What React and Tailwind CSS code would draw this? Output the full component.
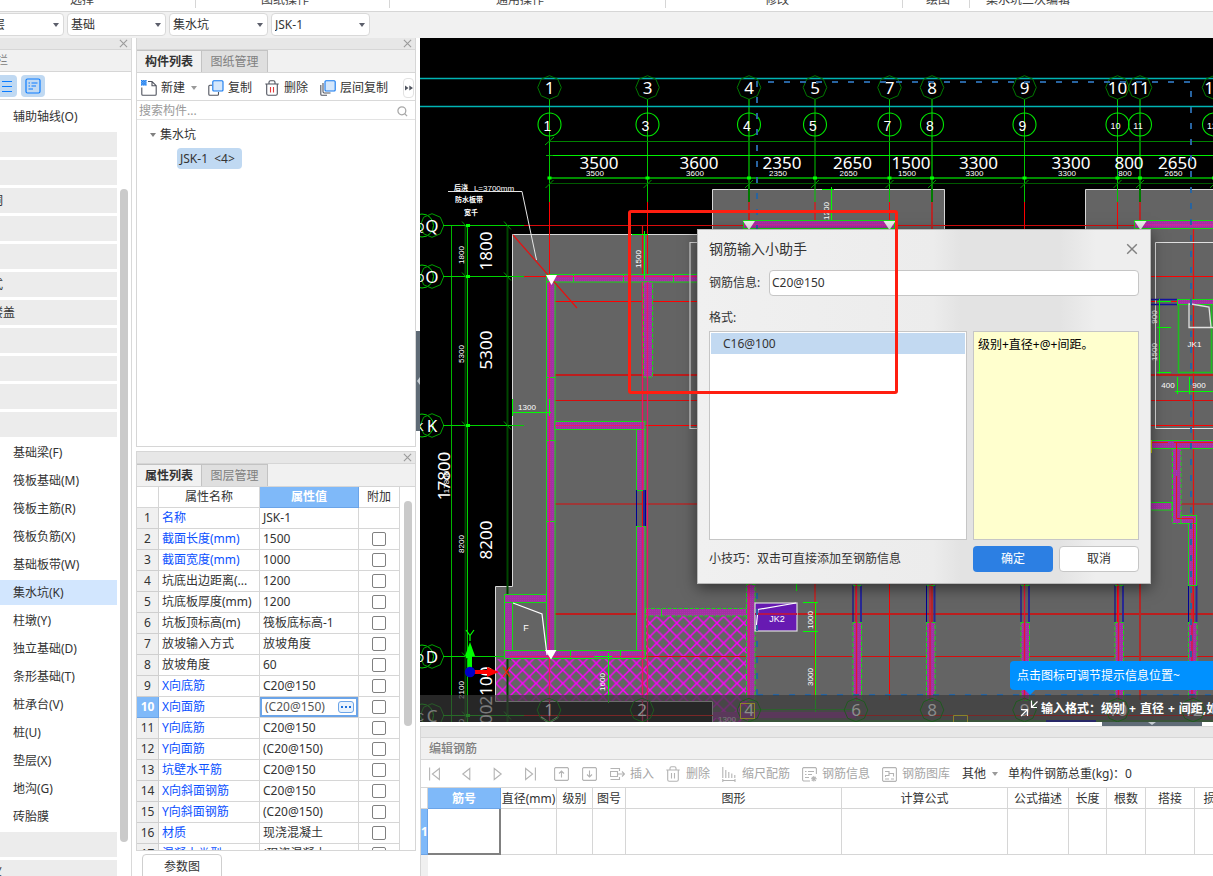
import React from "react";

/* ---------- small shared pieces ---------- */

function Cross({ className = "size-[9px] text-[#9a9a9a]" }) {
  return (
    <svg viewBox="0 0 10 10" className={className} fill="none" stroke="currentColor" strokeWidth="1.2" aria-hidden="true">
      <path d="M1 1L9 9M9 1L1 9" />
    </svg>
  );
}

function Caret({ className = "text-[#5c5f6b]" }) {
  return (
    <svg viewBox="0 0 6 4" className={`h-1 w-1.5 ${className}`} fill="currentColor" aria-hidden="true">
      <path d="M0 0H6L3 4Z" />
    </svg>
  );
}

function StripBar() {
  return (
    <div className="flex h-3 shrink-0 items-center justify-end border-b border-[#d6d6d6] bg-[#e7e7e7] pr-[3px]">
      <button type="button" aria-label="×" className="flex">
        <Cross />
      </button>
    </div>
  );
}

function Tabs({ items }) {
  return (
    <div role="tablist" className="flex h-[23px] shrink-0 border-b border-[#d6d6d6] bg-[#f1f1f1]">
      {items.map((t, i) => (
        <button
          key={t}
          type="button"
          role="tab"
          aria-selected={i === 0}
          className={
            i === 0
              ? "w-[65px] border-r border-t border-[#c3c3c3] bg-[#f1f1f1] font-bold text-[#333]"
              : "w-[66px] border-r border-t border-[#c3c3c3] bg-[#dfdfdf] text-[#808080]"
          }
        >
          {t}
        </button>
      ))}
    </div>
  );
}

/* ---------- top bars ---------- */

const ribbon = [
  { t: "选择", w: "w-[196px] pl-[70px]" },
  { t: "图纸操作", w: "w-[194px] pl-[65px]" },
  { t: "通用操作", w: "w-[276px] pl-[106px]" },
  { t: "修改", w: "w-[237px] pl-[99px]" },
  { t: "绘图", w: "w-[67px] pl-[23px]" },
  { t: "集水坑二次编辑", w: "w-[244px] pl-4" },
];

function Ribbon() {
  return (
    <div className="flex h-3 shrink-0 items-end overflow-hidden border-b border-[#d6d6d6] bg-white pb-[3px]">
      {ribbon.map((r) => (
        <div key={r.t} className={`flex h-4 shrink-0 items-end border-r border-[#d6d6d6] ${r.w}`}>
          <span className="leading-4 text-[#444]">{r.t}</span>
        </div>
      ))}
    </div>
  );
}

function Picker({ value, label, className }) {
  return (
    <div className={`relative flex shrink-0 items-center ${className}`}>
      <select
        aria-label={label}
        defaultValue={value}
        className="h-[23px] w-full appearance-none rounded border border-[#d9d9d9] bg-white pl-[3px] text-[#333] outline-none"
      >
        <option>{value}</option>
      </select>
      <span className="pointer-events-none absolute right-[5px]">
        <Caret />
      </span>
    </div>
  );
}

/* ---------- module sidebar ---------- */

const groups = ["", "", "洞", "", "", "式", "楼盖", "", "", "", ""];
const modules = [
  "基础梁(F)", "筏板基础(M)", "筏板主筋(R)", "筏板负筋(X)", "基础板带(W)", "集水坑(K)", "柱墩(Y)",
  "独立基础(D)", "条形基础(T)", "桩承台(V)", "桩(U)", "垫层(X)", "地沟(G)", "砖胎膜",
];

function Group({ name }) {
  return (
    <div className="flex h-[25px] shrink-0 items-center bg-[#ececec]">
      <span className="-ml-[9px] whitespace-nowrap">{name}</span>
    </div>
  );
}

function Sidebar() {
  return (
    <aside className="flex w-[132px] shrink-0 flex-col overflow-hidden border-r border-[#d9d9d9] bg-white">
      <StripBar />
      <div className="flex h-[22px] shrink-0 items-center border-b border-[#d6d6d6] bg-[#f1f1f1]">
        <span className="-ml-1 text-[#808080]">栏</span>
      </div>
      <div className="flex h-7 shrink-0 items-center gap-1 border-b border-[#d6d6d6]">
        <button type="button" aria-label="≡" className="flex h-[22px] w-[17px] items-center rounded-r bg-[#c0d9f2]">
          <svg viewBox="0 0 17 22" className="h-[22px] w-[17px]" stroke="#0a7cff" strokeWidth="1.2" aria-hidden="true">
            <path d="M2 6.5H12M2 11.5H12M2 16.5H12" />
          </svg>
        </button>
        <button type="button" aria-label="☰" className="flex h-[22px] w-6 items-center justify-center rounded bg-[#c0d9f2]">
          <svg viewBox="0 0 16 16" className="size-4" fill="none" stroke="#0a7cff" strokeWidth="1.2" aria-hidden="true">
            <rect x="1" y="1" width="14" height="14" rx="1.5" />
            <path d="M3.5 5H5M6.5 5H12.5M3.5 8H5M6.5 8H11M3.5 11H8" />
          </svg>
        </button>
      </div>
      <div className="flex min-h-0 flex-1 gap-[3px] overflow-hidden">
        <div className="flex w-[117px] flex-col gap-[3px] pt-1">
          <a href="#aux" className="flex h-[25px] shrink-0 items-center pl-[13px]">辅助轴线(O)</a>
          {groups.map((g, i) => (
            <Group key={i} name={g} />
          ))}
          {modules.map((m) => (
            <a
              key={m}
              href={`#${m}`}
              className={`flex h-[25px] shrink-0 items-center pl-[13px] ${m === "集水坑(K)" ? "bg-[#d2e6fe]" : ""}`}
            >
              {m}
            </a>
          ))}
          <Group name="" />
          <Group name="义" />
        </div>
        <div className="flex w-2 flex-col pb-[34px] pt-[89px]">
          <div className="flex-1 rounded-full bg-[#cacaca]" />
        </div>
      </div>
    </aside>
  );
}

/* ---------- component list ---------- */

function NewIcon() {
  return (
    <svg viewBox="0 0 16 16" className="size-4" fill="none" aria-hidden="true">
      <path d="M7 1.5H11L15.2 5.7V14.3Q15.2 15.3 14.2 15.3H1.8Q.8 15.3 .8 14.3V7.5M11 1.5V5.7H15.2" stroke="#50545f" strokeWidth="1.1" />
      <g fill="#1479ee">
        <rect x="0" y="0" width="5.5" height="5.5" fill="#8fc1f8" />
        <path d="M0 0h1.2v1.2H0zM2.2 0h1.2v1.2H2.2zM4.3 0h1.2v1.2H4.3zM1.1 1.1h1.2v1.2H1.1zM3.2 1.1h1.2v1.2H3.2zM0 2.2h1.2v1.2H0zM2.2 2.2h1.2v1.2H2.2zM4.3 2.2h1.2v1.2H4.3zM1.1 3.2h1.2v1.2H1.1zM3.2 3.2h1.2v1.2H3.2zM0 4.3h1.2v1.2H0zM2.2 4.3h1.2v1.2H2.2zM4.3 4.3h1.2v1.2H4.3z" />
      </g>
    </svg>
  );
}

function CopyIcon() {
  return (
    <svg viewBox="0 0 16 16" className="size-4" fill="none" aria-hidden="true">
      <path d="M4 5.3H1.8Q.8 5.3 .8 6.3V14.3Q.8 15.3 1.8 15.3H9.5Q10.5 15.3 10.5 14.3V12" stroke="#50545f" strokeWidth="1.1" />
      <rect x="4.8" y=".8" width="10.2" height="10.2" rx="1" fill="#d5e7fb" stroke="#1479ee" strokeWidth="1.1" />
    </svg>
  );
}

function LayersIcon() {
  return (
    <svg viewBox="0 0 16 16" className="size-4" fill="none" aria-hidden="true">
      <path d="M.8 5V14.3Q.8 15.3 1.8 15.3H7M3 3V11.5Q3 13 4.2 13H10.5" stroke="#50545f" strokeWidth="1.1" />
      <rect x="5" y=".8" width="10.2" height="10.2" rx="1" fill="#d5e7fb" stroke="#1479ee" strokeWidth="1.1" />
    </svg>
  );
}

function TrashIcon({ body = "#50545f", bars = "#e23b3b" }) {
  return (
    <svg viewBox="0 0 14 16" className="h-4 w-3.5" fill="none" strokeWidth="1.1" aria-hidden="true">
      <path d="M.3 4H13.7M4 4V2.3Q4 .8 5.5 .8H8.5Q10 .8 10 2.3V4M1.7 4V13.8Q1.7 15.3 3.2 15.3H10.8Q12.3 15.3 12.3 13.8V4" stroke={body} />
      <path d="M5.5 7V12.5M8.5 7V12.5" stroke={bars} />
    </svg>
  );
}

function ComponentPanel() {
  return (
    <section className="flex min-h-0 flex-1 flex-col border border-t-0 border-[#d6d6d6] bg-white">
      <StripBar />
      <Tabs items={["构件列表", "图纸管理"]} />
      <div className="flex h-7 shrink-0 items-center whitespace-nowrap border-b border-[#d9d9d9] pl-1 pt-0.5">
        <button type="button" className="flex items-center gap-1"><NewIcon />新建</button>
        <span className="ml-[6px] mr-[11px] flex"><Caret className="text-[#9a9a9a]" /></span>
        <button type="button" className="flex items-center gap-1"><CopyIcon />复制</button>
        <button type="button" className="ml-[13px] flex items-center gap-[5px]"><TrashIcon />删除</button>
        <button type="button" className="ml-3 flex items-center gap-1"><LayersIcon />层间复制</button>
        <button type="button" aria-label="»" className="ml-auto mr-px flex h-5 w-[11px] items-center justify-center rounded border border-[#e2e2e2]">
          <svg viewBox="0 0 8 6" className="h-1.5 w-2 shrink-0" fill="#50545f" aria-hidden="true">
            <path d="M0 .5L3.5 3L0 5.5ZM4.3 .5L8 3L4.3 5.5Z" />
          </svg>
        </button>
      </div>
      <div className="flex h-[19px] shrink-0 items-center border-b border-[#e3e3e3] pl-0.5 pr-[7px] pt-0.5">
        <input aria-label="搜索构件..." placeholder="搜索构件..." className="min-w-0 flex-1 bg-transparent outline-none placeholder:text-[#9a9a9a]" />
        <svg viewBox="0 0 12 12" className="size-[11px]" fill="none" stroke="#a8a8a8" strokeWidth="1.4" aria-hidden="true">
          <circle cx="5.3" cy="5.3" r="4.3" />
          <path d="M8.5 8.5L11 11" />
        </svg>
      </div>
      <div className="min-h-0 flex-1 pt-[3px]">
        <div className="flex h-6 items-center gap-1 pl-[13px]">
          <Caret className="text-[#808080]" />
          <span>集水坑</span>
        </div>
        <div className="ml-10 mt-px inline-flex h-[21px] items-center rounded bg-[#c0d9f2] pl-[3px] pr-1">
          <span className="whitespace-pre">{"JSK-1  <4> "}</span>
        </div>
      </div>
    </section>
  );
}

/* ---------- property list ---------- */

const props = [
  ["名称", "JSK-1", 1], ["截面长度(mm)", "1500", 1], ["截面宽度(mm)", "1000", 1], ["坑底出边距离(...", "1200", 0],
  ["坑底板厚度(mm)", "1200", 0], ["坑板顶标高(m)", "筏板底标高-1", 0], ["放坡输入方式", "放坡角度", 0],
  ["放坡角度", "60", 0], ["X向底筋", "C20@150", 1], ["X向面筋", "(C20@150)", 1], ["Y向底筋", "C20@150", 1],
  ["Y向面筋", "(C20@150)", 1], ["坑壁水平筋", "C20@150", 1], ["X向斜面钢筋", "C20@150", 1],
  ["Y向斜面钢筋", "(C20@150)", 1], ["材质", "现浇混凝土", 1], ["混凝土类型", "(现浇混凝土", 1],
];

function PropertyPanel() {
  return (
    <section className="flex h-[425px] shrink-0 flex-col">
      <div className="flex h-[400px] shrink-0 flex-col border border-[#d6d6d6] bg-white">
        <StripBar />
        <Tabs items={["属性列表", "图层管理"]} />
        <div className="flex min-h-0 flex-1 overflow-hidden">
          <table className="h-fit w-[263px] table-fixed border-separate border-spacing-0">
            <colgroup>
              <col className="w-[22px]" />
              <col className="w-[101px]" />
              <col className="w-[99px]" />
              <col className="w-[41px]" />
            </colgroup>
            <thead>
              <tr className="h-[21px]">
                <th className="border-b border-r border-[#d6d6d6] p-0" />
                <th className="border-b border-r border-[#d6d6d6] p-0 font-normal">属性名称</th>
                <th className="border-b border-r border-[#6ba4e8] bg-[#7fb9f9] p-0 text-white">属性值</th>
                <th className="border-b border-r border-[#d6d6d6] p-0 font-normal">附加</th>
              </tr>
            </thead>
            <tbody>
              {props.map(([name, value, blue], i) => {
                const active = i === 9;
                return (
                  <tr key={name} className="h-[21px]">
                    <th
                      className={
                        active
                          ? "border-b border-r border-[#6ba4e8] bg-[#7fb9f9] p-0 text-white"
                          : "border-b border-r border-[#cfcfcf] bg-[#f0f0f0] p-0 font-normal"
                      }
                    >
                      {i + 1}
                    </th>
                    <td className={`overflow-hidden whitespace-nowrap border-b border-r border-[#d6d6d6] p-0 pl-[3px] ${blue ? "text-[#0a50ff]" : ""}`}>
                      {name}
                    </td>
                    <td className={`overflow-hidden whitespace-nowrap border-b border-r border-[#d6d6d6] p-0 ${active ? "" : "pl-[3px]"}`}>
                      {active ? (
                        <div className="flex h-5 items-center justify-between border-2 border-[#6ba4e8] pl-[3px] pr-0.5 text-[#555]">
                          <span>{value}</span>
                          <button type="button" aria-label="···" className="flex h-3 w-4 items-center justify-center rounded-[3px] border border-[#6ba4e8] bg-[#e8f2fd]">
                            <svg viewBox="0 0 10 2" className="h-0.5 w-2.5" fill="#1d6fd8" aria-hidden="true">
                              <path d="M0 0h2v2H0zM4 0h2v2H4zM8 0h2v2H8z" />
                            </svg>
                          </button>
                        </div>
                      ) : (
                        value
                      )}
                    </td>
                    <td className="border-b border-r border-[#d6d6d6] p-0">
                      {i > 0 && (
                        <input
                          type="checkbox"
                          aria-label={name}
                          className="mx-auto block size-3.5 appearance-none rounded-[2px] border border-[#808080] bg-white"
                        />
                      )}
                    </td>
                  </tr>
                );
              })}
            </tbody>
          </table>
          <div className="ml-1 mt-[14px] h-[225px] w-2 rounded-full bg-[#cacaca]" />
        </div>
      </div>
      <div className="flex flex-1 overflow-hidden pl-1.5 pt-[3px]">
        <button type="button" className="h-[26px] w-20 rounded border border-[#cfcfcf] bg-white">参数图</button>
      </div>
    </section>
  );
}

/* ---------- drawing ---------- */

const BIG = "'Noto Sans', 'Noto Sans CJK SC', sans-serif";
const SMALL = "'Liberation Sans', sans-serif";

const axes = [
  [549.5, "1", 1], [647.5, "3", 1], [749, "4", 2], [815, "5", 1], [889.5, "7", 1], [932, "8", 2],
  [1024.5, "9", 1], [1117.5, "10", 1], [1140, "11", 2], [1214, "12", 1],
];
const spans = [
  [599, "3500"], [699, "3600"], [782, "2350"], [852.5, "2650"], [911, "1500"],
  [978.5, "3300"], [1071, "3300"], [1129, "800"], [1177.5, "2650"],
];
const rows = [[225.5, "Q"], [276.5, "O"], [425.5, "K"], [656.5, "D"], [715.5, "C"]];
const rowSpans = [[251, "1800"], [350, "5300"], [540, "8200"], [686, "2100"], [724, "5100"]];
const lowAxes = [
  [549, "1"], [642, "2"], [749, "4"], [856, "6"], [932, "8"], [1024.5, "9"], [1117.5, "10"], [1193, "12"],
];

function octagon(cx, cy, r) {
  return Array.from({ length: 8 }, (_, i) => {
    const a = (Math.PI / 4) * i;
    return `${(cx + r * Math.sin(a)).toFixed(1)},${(cy - r * Math.cos(a)).toFixed(1)}`;
  }).join(" ");
}

function Dim({ x, y, children, v = false, size = 8 }) {
  return (
    <text
      x={x}
      y={y}
      fontFamily={SMALL}
      fontSize={size}
      fill="#fff"
      textAnchor="middle"
      dominantBaseline="central"
      transform={v ? `rotate(-90 ${x} ${y})` : undefined}
    >
      {children}
    </text>
  );
}

function BigText({ x, y, children, v = false, fill = "#fff" }) {
  return (
    <text
      x={x}
      y={y + 6}
      fontFamily={BIG}
      fontSize="17"
      fill={fill}
      textAnchor="middle"
      transform={v ? `rotate(-90 ${x} ${y})` : undefined}
    >
      {children}
    </text>
  );
}

function Wall({ x, y, w, h, dashed = false }) {
  return (
    <g>
      <rect x={x} y={y} width={w} height={h} fill="url(#wall)" />
      <rect x={x} y={y} width={w} height={h} fill="none" stroke="#14dc14" strokeWidth="1" strokeDasharray={dashed ? "4 1.5" : undefined} />
    </g>
  );
}

function Drawing() {
  return (
    <svg viewBox="420 38 793 684" preserveAspectRatio="xMinYMin slice" className="block size-full" fill="none">
      <defs>
        <pattern id="wall" width="2" height="2" patternUnits="userSpaceOnUse">
          <rect width="2" height="2" fill="#a035a0" />
          <rect width="1" height="1" fill="#b22cb2" />
        </pattern>
        <pattern id="hatch" width="13.4" height="13.4" patternUnits="userSpaceOnUse">
          <path d="M-1 -1L14.4 14.4M14.4 -1L-1 14.4" stroke="#f0f" strokeWidth="1.4" />
        </pattern>
      </defs>

      <rect x="420" y="38" width="793" height="684" fill="#000" />
      <path d="M512.5 234.5H712.5V189.5H944.5V236H1085.5V189.5H1214V723H712.5V701.5H495.5V586.5H512.5Z" fill="#646464" />
      <path d="M512.5 586.5V234.5H712.5V189.5H944.5V236M1085.5 236V189.5H1214M512.5 586.5H495.5V701.5H712.5V723" stroke="#d8d8d8" />
      <path d="M496 659H646V616H748V723H713V701H496Z" fill="url(#hatch)" />

      {/* horizontal axis lines */}
      <g stroke="#f00">
        <path d="M524 276.5H1214M549 301.5H1214M549 425.5H1214" />
        <path d="M524 225.5H1214M549 400.5H1214M549 504H1214M524 656.5H1214" stroke="#d80c0c" />
        <path d="M549 375H1214M549 614H1214" stroke="#bc1e1e" strokeWidth="2" />
        <path d="M524 715.5H1214" />
      </g>

      {/* vertical axis lines */}
      {axes.map(([x, , w]) => (
        <g key={x}>
          <path d={`M${x} 202V700`} stroke={w === 2 ? "#b42828" : "#f00"} strokeWidth={w} />
          <path d={`M${x} 99V202`} stroke={w === 2 ? "#007a00" : "#00c800"} strokeWidth={w} />
        </g>
      ))}
      <path d="M642.5 226V722M856 584V700M1193.5 229V700" stroke="#e81010" strokeWidth="1.2" />

      {/* top dimension strings */}
      <path d="M420 78.5H1214M420 106.5H1214" stroke="#00b4b4" strokeWidth="1.3" />
      <path d="M549 141.5H1214" stroke="#008200" />
      <path d="M549 155.5H1214" stroke="#00f000" />
      <path d="M549 178H1214" stroke="#008c00" strokeWidth="2" />
      <path d="M549 183.5H1214" stroke="#005a00" />
      <path d="M545 145L554 137M546 155.5H553" stroke="#00b400" />
      {axes.map(([x, label]) => (
        <g key={label}>
          <polygon points={octagon(x, 87.5, 11.8)} stroke="#007800" />
          <circle cx={x} cy="124.5" r="11.5" stroke="#00e600" strokeWidth="1.1" />
          <path d={`M${x - 4} 188L${x + 4} 180`} stroke="#009600" />
          <path d={`M${x - 2} 178H${x + 2}`} stroke="#0f0" strokeWidth="3" />
          <BigText x={x} y={87.5}>{label}</BigText>
          <Dim x={x - 2} y={126} size={label.length > 1 ? 9 : 14}>{label}</Dim>
        </g>
      ))}
      {spans.map(([x, label]) => (
        <g key={x}>
          <BigText x={x} y={163}>{label}</BigText>
          <Dim x={x - 4} y={173}>{label}</Dim>
        </g>
      ))}

      {/* left dimension strings */}
      <path d="M451.5 225V722" stroke="#00b400" />
      <path d="M465.5 225V722" stroke="#004600" strokeWidth="2" />
      <path d="M467.5 225V722" stroke="#00d200" />
      <path d="M507.5 225V722" stroke="#004600" strokeWidth="2" />
      {rows.map(([y, label]) => (
        <g key={label}>
          <circle cx="422" cy={y} r="11.5" stroke="#00d200" />
          <polygon points={octagon(432, y, 11.8)} stroke="#00a000" />
          <path d={`M443 ${y}H524`} stroke="#00d200" />
          <path d={`M504 ${y - 4}L511 ${y + 4}M462 ${y - 4}L468 ${y + 3}`} stroke="#009600" />
          <path d={`M466 ${y}H470`} stroke="#0f0" strokeWidth="3" />
          <BigText x={432} y={y}>{label}</BigText>
          <Dim x={420} y={y + 1} size={11}>{label}</Dim>
        </g>
      ))}
      {rowSpans.map(([y, label]) => (
        <g key={label}>
          <BigText x={486} y={y} v>{label}</BigText>
          <Dim x={461} y={y + 4} v>{label}</Dim>
        </g>
      ))}
      <BigText x={444} y={476} v>17800</BigText>
      <Dim x={446} y={482} v>17800</Dim>

      {/* leader note */}
      <path d="M448 191.5H522L536.5 260" stroke="#e6e6e6" />
      <Dim x={494} y={188}>L=3700mm</Dim>
      <g fontFamily="'Noto Sans CJK SC', sans-serif" fontSize="7" fontWeight="700" fill="#fff">
        <text x="454" y="190">后浇</text>
        <text x="455" y="202">防水板带</text>
        <text x="464" y="215">宽千</text>
      </g>

      {/* left building walls */}
      <Wall x={546.5} y={274.5} w={152} h={7.5} />
      <Wall x={546.5} y={282} w={8.5} h={369} />
      <Wall x={643.5} y={282} w={9} h={95} dashed />
      <Wall x={555} y={421.5} w={90} h={8} />
      <Wall x={636.5} y={429.5} w={8.5} h={61} />
      <Wall x={636.5} y={526.5} w={8.5} h={132} />
      <Wall x={504.5} y={650.5} w={140.5} h={8} />
      <Wall x={504.5} y={594.5} w={8} h={56} />
      <Wall x={504.5} y={594.5} w={42} h={8} />
      <Wall x={645.5} y={608.5} w={102} h={7.5} dashed />
      <Wall x={746.5} y={584.5} w={8.5} h={116} dashed />
      <path d="M573.5 274V282M623.5 274V282M673.5 274V282M547 377.5H555M547 440.5H555M547 521.5H555M570.5 651V658M620.5 651V658M661.5 609V616" stroke="#14dc14" />
      <path d="M549.5 282V722M642.5 282V490M642.5 526V722M647.5 282V722M749 584V700" stroke="#f01464" strokeWidth="1.3" />
      <path d="M549 276.5H697M510 656.5H645M555 425.5H640" stroke="#f01464" />
      <path d="M636.5 490V526M645.5 490V526" stroke="#000096" />
      <path d="M644 490V526" stroke="#282896" strokeWidth="2" />
      <path d="M513 235L577 308" stroke="#e81010" strokeWidth="1.2" />
      <path d="M513 603L542 614L547 655" stroke="#fff" strokeWidth="1.2" />
      <Dim x={526} y={628} size={9}>F</Dim>
      <path d="M546 275H557L551.5 285Z" fill="#fff" />
      <path d="M545 650H556.5L551 659.5Z" fill="#fff" />

      {/* local dimensions */}
      <g stroke="#0f0">
        <path d="M644.5 231V279M632 234.5H648" />
        <path d="M512 412.5H551M512.5 399V416M549.5 399V416" />
        <path d="M608.5 653V703M594 656.5H612" />
        <path d="M831.5 187V229M822 189.5H834" />
        <path d="M815.5 602V718M803 602.5H818M803 631.5H818M796.5 584V591" />
      </g>
      <Dim x={638.5} y={259} v>1500</Dim>
      <Dim x={527} y={407}>1300</Dim>
      <Dim x={602.5} y={682} v>1600</Dim>
      <Dim x={826} y={211} v>1200</Dim>
      <Dim x={810} y={620} v>1000</Dim>
      <Dim x={810} y={677} v>3000</Dim>

      {/* upper walls */}
      <Wall x={743.5} y={220.5} w={151} h={8} />
      <Wall x={1134.5} y={220.5} w={80} h={8} />
      <path d="M744 225H894M1135 225H1214" stroke="#e61ea0" />
      <path d="M743 221H755L749 230ZM883.5 221H895.5L889.5 230ZM1134.5 221H1146.5L1140.5 230Z" fill="#eee" />
      <path d="M700 242.5H690V428.5H700" stroke="#d8d8d8" strokeWidth="1.2" />
      <path d="M1214 242.5H1155.5V428.5H1214" stroke="#e0e0e0" />

      {/* pit JK2 and lower wall stubs */}
      <rect x="755" y="603" width="42" height="28" fill="#671ab2" stroke="#ddd" strokeWidth="1.2" />
      <path d="M756 629L758 609.5L796 603" stroke="#fff" strokeWidth="1.2" />
      <path d="M755 614H797" stroke="#b41450" strokeWidth="2" />
      <Dim x={777} y={619} size={9}>JK2</Dim>
      {[852.5, 926, 1020.5, 1114.5, 1188].map((x) => (
        <g key={x}>
          <path d={`M${x + 0.5} 585V622`} stroke="#000096" />
          <path d={`M${x + 8.5} 585V622`} stroke="#282896" strokeWidth="2" />
          <Wall x={x + 0.5} y={622.5} w={8.5} h={78} dashed />
          <path d={`M${x + 0.5} 585.5H${x + 9}`} stroke="#14dc14" />
          <path d={`M${x + 4} 585V700`} stroke="#e81030" strokeWidth="1.3" />
        </g>
      ))}

      {/* right hand part */}
      <path d="M1150 299.5H1177M1150 304.5H1177" stroke="#1414a0" strokeWidth="1.4" />
      <Wall x={1177.5} y={299.5} w={38} h={5} />
      <path d="M1178.5 305V372.5H1214M1211.5 305V372" stroke="#1ebe1e" strokeWidth="1.6" />
      <path d="M1159.5 299V374M1157 301.5H1171M1157 327.5H1171M1157 372.5H1171M1177.5 377V394M1189.5 377V394M1175 391.5H1214" stroke="#0f0" />
      <path d="M1214 327.5H1189V304H1191L1209 307L1211 327" stroke="#e0e0e0" strokeWidth="1.3" />
      <Dim x={1194.5} y={344}>JK1</Dim>
      <Dim x={1154} y={317} v>900</Dim>
      <Dim x={1154} y={352} v>1500</Dim>
      <Dim x={1168} y={385}>400</Dim>
      <Dim x={1199} y={385}>900</Dim>
      <Wall x={1150} y={440.5} w={65} h={8} />
      <Wall x={1172.5} y={448.5} w={8.5} h={75} dashed />
      <Wall x={1150} y={502.5} w={22} h={7.5} />
      <Wall x={1181} y={515.5} w={15.5} h={8} />
      <Wall x={1188.5} y={523.5} w={8} h={62} />
      <path d="M1151 442.5H1168M1174 442.5H1214M1176.5 442V470M1176.5 476V518.5H1193.5V585" stroke="#f01414" />
      <path d="M1151.5 440V453" stroke="#c8c800" />

      {/* selection outline */}
      <path d="M757 695V82H1191V695M757 695H1214" stroke="#2864a0" strokeWidth="2" strokeDasharray="6 10" />

      {/* coordinate triad */}
      <path d="M470 668V656" stroke="#0f0" strokeWidth="4" />
      <path d="M465 656L470 642L475 656Z" fill="#0f0" />
      <path d="M466 630L470 635.5L474 630M470 635.5V641" stroke="#0f0" strokeWidth="1.2" />
      <path d="M474 672H488" stroke="#f00" strokeWidth="4" />
      <path d="M487 667L499 672L487 677Z" fill="#f00" />
      <path d="M503 667L510 677M510 667L503 677" stroke="#f02800" strokeWidth="1.3" />
      <circle cx="470" cy="672" r="5.2" fill="#0000c8" />

      {/* shaded hint strip */}
      <path d="M748 709.5H856M748 721H1214M797 715.5H819" stroke="#14b414" />
      <path d="M713 715H856" stroke="#a035a0" strokeWidth="6" />
      <path d="M1046 721H1096" stroke="#0000c8" strokeWidth="2" />
      <path d="M541 717L549 723L558 717" stroke="#ccc" strokeWidth="2" />
      <Dim x={727} y={719}>1300</Dim>
      <rect x="420" y="695" width="793" height="27" fill="#3a3a3a" fillOpacity=".68" />
      {lowAxes.map(([x, label]) => (
        <g key={label}>
          <polygon points={octagon(x, 710, 11.8)} stroke="#1f5a1f" />
          <BigText x={x} y={710} fill="#8c8c8c">{label}</BigText>
        </g>
      ))}
      <rect x="740.5" y="703.5" width="14" height="15" stroke="#8c8228" />
      <path d="M953.5 722V715.5H967.5V722" stroke="#8c8228" />
      <path d="M1031.5 700.5V707.5H1037M1031.5 707.5L1037.5 701.5M1021 709.5H1027.5V716M1027.5 709.5L1021 716" stroke="#fff" strokeWidth="1.2" />
    </svg>
  );
}

/* ---------- dialog ---------- */

function Dialog() {
  return (
    <div
      role="dialog"
      aria-labelledby="dlg-title"
      className="absolute left-[277px] top-[191px] flex h-[355px] w-[454px] flex-col border border-[#b9b9b9] bg-[#eeeeee] bg-[linear-gradient(90deg,#f0f0f0_0%,#ececec_52%,#e3e3e3_58%,#e3e3e3_80%,#eeeeee_88%)] px-[11px] text-[#333] shadow-[0_4px_14px_rgba(0,0,0,0.5)]"
    >
      <div className="flex h-[38px] items-center justify-between">
        <h2 id="dlg-title" className="text-sm">钢筋输入小助手</h2>
        <button type="button" aria-label="×" className="flex pr-px">
          <Cross className="size-3 text-[#808080]" />
        </button>
      </div>
      <div className="flex h-7 items-center pt-px">
        <label htmlFor="bar-info" className="w-[60px]">钢筋信息:</label>
        <input id="bar-info" defaultValue="C20@150" className="h-[26px] min-w-0 flex-1 rounded border border-[#c6c6c6] bg-white px-0.5 outline-none" />
      </div>
      <div className="flex h-[35px] items-center pt-2">格式:</div>
      <div className="flex h-[209px] gap-1.5">
        <ul role="listbox" className="w-[258px] border border-[#c6c6c6] bg-white p-px">
          <li role="option" aria-selected="true" className="flex h-[21px] items-center bg-[#c2d9f1] pl-3">C16@100</li>
        </ul>
        <div className="flex-1 border border-[#c6c6c6] bg-[#ffffce] px-1 pt-[5px] text-black">级别+直径+@+间距。</div>
      </div>
      <div className="flex items-center gap-1.5 pt-1.5">
        <span className="flex-1">小技巧：双击可直接添加至钢筋信息</span>
        <button type="button" className="h-[26px] w-20 rounded bg-[#2c7fe3] text-white">确定</button>
        <button type="button" className="h-[26px] w-20 rounded border border-[#c6c6c6] bg-white">取消</button>
      </div>
    </div>
  );
}

function Canvas() {
  return (
    <div className="relative min-h-0 flex-1 overflow-hidden bg-black">
      <Drawing />
      <Dialog />
      <div className="pointer-events-none absolute left-[208px] top-[172px] h-[184px] w-[270px] rounded-[3px] border-[3px] border-[#ff1e10]" />
      <div className="absolute left-[590px] right-0 top-[623px] flex h-[29px] items-center rounded-l bg-[#0091ff] pl-[7px] text-white">
        <span className="whitespace-nowrap">点击图标可调节提示信息位置~</span>
        <svg viewBox="0 0 12 6" className="absolute left-[14px] top-[28px] h-1.5 w-3" fill="#0091ff" aria-hidden="true">
          <path d="M0 0H12L6 6Z" />
        </svg>
      </div>
      <div className="absolute bottom-0 left-[621px] flex h-[27px] items-center gap-1 whitespace-nowrap font-bold text-white">
        <span>输入格式：级别</span>
        <span>+</span>
        <span>直径</span>
        <span>+</span>
        <span>间距,如</span>
      </div>
    </div>
  );
}

/* ---------- rebar editor ---------- */

function Nav({ label, d, w = "w-[11px]", box = "0 0 11 14" }) {
  return (
    <button type="button" aria-label={label} className={`flex ${w}`}>
      <svg viewBox={box} className={`h-3.5 ${w}`} fill="none" stroke="#b4b4b4" strokeWidth="1.1" aria-hidden="true">
        <path d={d} />
      </svg>
    </button>
  );
}

function Tool({ label, d, className }) {
  return (
    <button type="button" className={`flex shrink-0 items-center gap-[5px] text-[#a6a6a6] ${className}`}>
      <svg viewBox="0 0 15 15" className="size-[15px]" fill="none" stroke="#b4b4b4" strokeWidth="1.1" aria-hidden="true">
        <path d={d} />
      </svg>
      {label}
    </button>
  );
}

const cols = [
  ["", "w-[7px]"], ["筋号", "w-[73px]"], ["直径(mm)", "w-14"], ["级别", "w-9"], ["图号", "w-[33px]"],
  ["图形", "w-[216px]"], ["计算公式", "w-[166px]"], ["公式描述", "w-[61px]"], ["长度", "w-[38px]"],
  ["根数", "w-[39px]"], ["搭接", "w-[49px]"], ["损", "w-[30px]"],
];

function RebarPanel() {
  return (
    <section className="flex h-[150px] shrink-0 flex-col overflow-hidden border-l border-t border-[#d6d6d6] bg-white">
      <div className="h-[11px] shrink-0 border-b border-[#d6d6d6] bg-[#e7e7e7]" />
      <div className="flex h-[22px] shrink-0 items-center border-b border-[#d6d6d6] bg-[#f1f1f1] pl-2">
        <span className="font-medium text-[#808080]">编辑钢筋</span>
      </div>
      <div className="flex h-7 shrink-0 items-center whitespace-nowrap border-b border-[#d6d6d6] pl-2 pt-px">
        <div className="flex shrink-0 gap-[21px]">
          <Nav label="|◁" d="M.6 .5V13.5M10.4 1.5V12.5L3.4 7Z" />
          <Nav label="◁" d="M8.8 1.5V12.5L1.8 7Z" />
          <Nav label="▷" d="M1.2 1.5V12.5L8.2 7Z" />
          <Nav label="▷|" d="M10.4 .5V13.5M.6 1.5V12.5L7.6 7Z" />
        </div>
        <div className="ml-[18px] flex shrink-0 gap-[13px]">
          <Nav label="↑" w="w-[15px]" box="0 0 15 14" d="M1.5 .6H13.5L14.4 1.5V12.5L13.5 13.4H1.5L.6 12.5V1.5ZM7.5 10.5V4M5 6.5L7.5 4L10 6.5" />
          <Nav label="↓" w="w-[15px]" box="0 0 15 14" d="M1.5 .6H13.5L14.4 1.5V12.5L13.5 13.4H1.5L.6 12.5V1.5ZM7.5 3.5V10M5 7.5L7.5 10L10 7.5" />
        </div>
        <Tool label="插入" className="ml-[13px]" d="M.5 1.5H9.5V4M.5 12.5H9.5V10M.5 4.5H7.5V9.5H.5ZM7.5 7H14.5M12 4.5L14.5 7L12 9.5" />
        <button type="button" className="ml-3 flex shrink-0 items-center gap-1.5 text-[#a6a6a6]">
          <TrashIcon body="#b4b4b4" bars="#b4b4b4" />删除
        </button>
        <Tool label="缩尺配筋" className="ml-3" d="M.8 0V11M3.8 3V11M6.8 5V11M9.8 6.5V11M12.8 8V11M.8 13.5H13M.8 12V15M13 12V15" />
        <Tool label="钢筋信息" className="ml-3" d="M14.4 7V1.5L13.5 .6H1.5L.6 1.5V13L1.5 14H8M3 4.5H4.5M6 4.5H12M3 7.5H4.5M6 7.5H10M3 10.5H7M11.8 9V14.5M9 11.8H14.8M9.8 9.8L13.8 13.8M13.8 9.8L9.8 13.8" />
        <Tool label="钢筋图库" className="ml-3" d="M1.5 .6H13.5L14.4 1.5V13.5L13.5 14.4H1.5L.6 13.5V1.5ZM3 4.5H7V8.5H3.5V10M7 6.5H11.5V9.5M3 12H7M9 12H12" />
        <button type="button" className="ml-3 flex shrink-0 items-center gap-1.5">其他<Caret className="text-[#9a9a9a]" /></button>
        <span className="ml-2.5 shrink-0">单构件钢筋总重(kg)：0</span>
      </div>
      <div className="flex min-h-0 flex-1 flex-col overflow-hidden">
        <table className="w-[804px] table-fixed border-separate border-spacing-0">
          <colgroup>
            {cols.map(([name, w]) => (
              <col key={name} className={w} />
            ))}
          </colgroup>
          <thead>
            <tr className="h-[21px]">
              {cols.map(([name], i) => (
                <th
                  key={name}
                  className={
                    i === 1
                      ? "border-b border-r border-[#6ba4e8] bg-[#7fb9f9] p-0 pt-px text-white"
                      : "overflow-hidden whitespace-nowrap border-b border-r border-[#d6d6d6] p-0 pt-px font-normal"
                  }
                >
                  {name}
                </th>
              ))}
            </tr>
          </thead>
          <tbody>
            <tr className="h-[46px]">
              {cols.map(([name], i) => (
                <td
                  key={name}
                  className={
                    i === 0
                      ? "border-b border-r border-[#6ba4e8] bg-[#7fb9f9] p-0 text-center font-bold text-white"
                      : i === 1
                        ? "border-b-2 border-r-2 border-[#808080] p-0"
                        : "border-b border-r border-[#d6d6d6] p-0"
                  }
                >
                  {i === 0 ? "1" : ""}
                </td>
              ))}
            </tr>
          </tbody>
        </table>
        <div className="w-[7px] flex-1 bg-[#f0f0f0]" />
      </div>
    </section>
  );
}

/* ---------- page ---------- */

export default function App() {
  return (
    <div className="flex h-screen flex-col overflow-hidden bg-white font-['Noto_Sans','Noto_Sans_CJK_SC',sans-serif] text-xs leading-4 text-[#333]">
      <Ribbon />
      <div className="flex h-[26px] shrink-0 items-start gap-[3px] bg-[#f1f1f1] pt-px">
        <Picker value="层" label="层" className="-ml-[11px] w-[75px]" />
        <Picker value="基础" label="基础" className="w-[99px]" />
        <Picker value="集水坑" label="集水坑" className="w-[99px]" />
        <Picker value="JSK-1" label="JSK-1" className="w-[99px]" />
      </div>
      <div className="flex min-h-0 flex-1">
        <Sidebar />
        <div className="ml-1 flex w-[280px] shrink-0 flex-col gap-1">
          <ComponentPanel />
          <PropertyPanel />
        </div>
        <div className="flex w-1 shrink-0 flex-col pt-[293px]">
          <button type="button" aria-label="◂" className="flex h-[100px] w-1 items-center bg-[#5f6b76]">
            <svg viewBox="0 0 4 8" className="h-2 w-1" fill="#c5ccd2" aria-hidden="true">
              <path d="M4 0V8L1 4Z" />
            </svg>
          </button>
        </div>
        <main className="flex min-w-0 flex-1 flex-col">
          <Canvas />
          <div className="flex h-1 shrink-0 justify-end pr-[11px]">
            <button type="button" aria-label="▾" className="flex h-1 w-[100px] justify-center bg-[#5f6b76]">
              <svg viewBox="0 0 8 4" className="h-1 w-2" fill="#c5ccd2" aria-hidden="true">
                <path d="M0 0H8L4 3Z" />
              </svg>
            </button>
          </div>
          <RebarPanel />
        </main>
      </div>
    </div>
  );
}
